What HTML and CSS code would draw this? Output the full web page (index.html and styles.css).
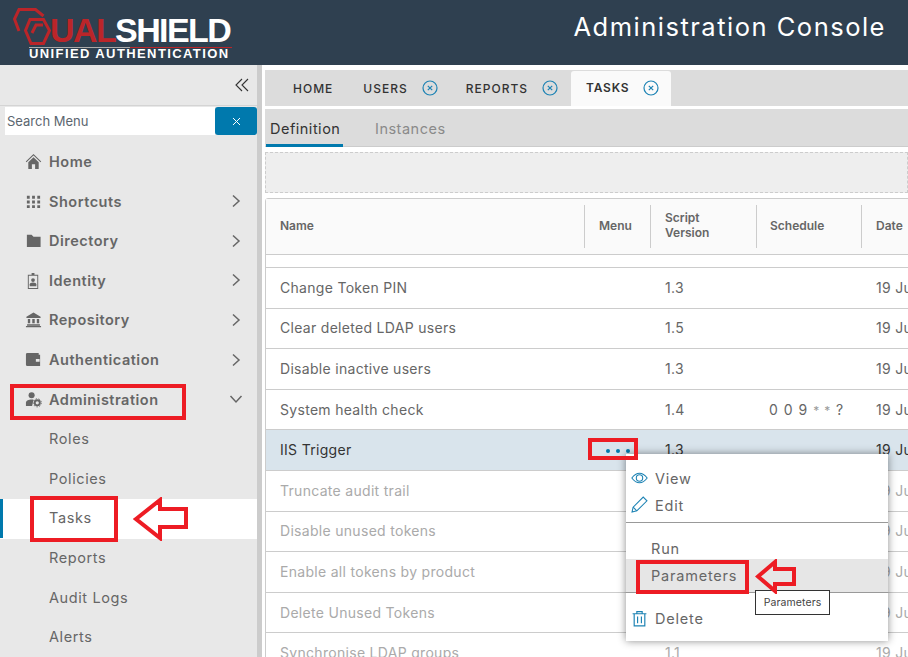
FILE: index.html
```html
<!DOCTYPE html>
<html lang="en">
<head>
    <meta charset="UTF-8">
    <meta name="viewport" content="width=device-width, initial-scale=1.0">
    <title>Administration Console</title>
    <link rel="stylesheet" href="styles.css">
</head>
<body>
    <header class="topbar">
        <div class="logo">
            <svg class="logo-mark" width="46" height="40" viewBox="0 0 46 40" fill="none" stroke="#bb2529" stroke-width="3">
                <path d="M6 23 1.500 11 6 1.500h16.500l8 6.500"/>
                <path d="M17 11.500h13.500l6 11-6 13H18l-5.500-13z"/>
                <path d="M19 25l4-8h7"/>
            </svg>
            <div class="logo-text">
                <div class="logo-name"><span class="logo-red">UAL</span>SHIELD</div>
                <div class="logo-sub">UNIFIED AUTHENTICATION</div>
            </div>
        </div>
        <div class="console-title">Administration Console</div>
    </header>

    <div class="layout">
        <aside class="sidebar">
            <div class="collapse-row">
                <svg width="14" height="14" viewBox="0 0 14 14" fill="none" stroke="#333" stroke-width="1.1"><path d="M7 1 1 7l6 6M13 1 7 7l6 6"/></svg>
            </div>
            <div class="search-row">
                <div class="search-input">Search Menu</div>
                <div class="search-btn">
                    <svg width="9" height="9" viewBox="0 0 9 9" stroke="#fff" stroke-width="1"><path d="M1 1l7 7M8 1 1 8"/></svg>
                </div>
            </div>
            <nav class="menu">
                <a class="menu-item">
                    <svg class="menu-icon" viewBox="0 0 18 18" fill="#666"><path d="M9 1 .8 9l.8.8L9 2.600l7.400 7.200.8-.8z"/><path d="M9 4.400 3.500 9.700V17h3.800v-5h3.400v5h3.800V9.700z"/></svg>
                    Home
                </a>
                <a class="menu-item">
                    <svg class="menu-icon" viewBox="0 0 18 18" fill="#666"><path d="M2 3h3v3H2zM7.500 3h3v3h-3zM13 3h3v3h-3zM2 8h3v3H2zM7.500 8h3v3h-3zM13 8h3v3h-3zM2 13h3v3H2zM7.500 13h3v3h-3zM13 13h3v3h-3z"/></svg>
                    Shortcuts
                    <svg class="chevron" viewBox="0 0 10 14"><path d="M2 1.500 8 7l-6 5.500"/></svg>
                </a>
                <a class="menu-item">
                    <svg class="menu-icon" viewBox="0 0 18 18" fill="#666"><path d="M2 3h5l2 2h7.500v11H2z"/></svg>
                    Directory
                    <svg class="chevron" viewBox="0 0 10 14"><path d="M2 1.500 8 7l-6 5.500"/></svg>
                </a>
                <a class="menu-item">
                    <svg class="menu-icon" viewBox="0 0 18 18" fill="#666"><path d="M3 3h4V1h3v2h4v15H3zm1 1v13h9V4z"/><circle cx="8.500" cy="8.500" r="2"/><path d="M5 15v-2c0-1 1.500-1.800 3.500-1.800S12 12 12 13v2z"/></svg>
                    Identity
                    <svg class="chevron" viewBox="0 0 10 14"><path d="M2 1.500 8 7l-6 5.500"/></svg>
                </a>
                <a class="menu-item">
                    <svg class="menu-icon" viewBox="0 0 18 18" fill="#666"><path d="M9 1.500 1.500 6v1.500h15V6zM3 8.500h2.500V13H3zM7.700 8.500h2.600V13H7.700zM12.500 8.500H15V13h-2.500zM2.200 14h13.600v1.500H2.200zM1 16h16v1.200H1z"/></svg>
                    Repository
                    <svg class="chevron" viewBox="0 0 10 14"><path d="M2 1.500 8 7l-6 5.500"/></svg>
                </a>
                <a class="menu-item">
                    <svg class="menu-icon" viewBox="0 0 18 18" fill="#666"><path d="M2.500 2h12v2h1.500v12H2.500A1.500 1.500 0 0 1 1 14.500v-11A1.500 1.500 0 0 1 2.500 2zm9 6.500v3h4v-3z"/></svg>
                    Authentication
                    <svg class="chevron" viewBox="0 0 10 14"><path d="M2 1.500 8 7l-6 5.500"/></svg>
                </a>
                <a class="menu-item">
                    <svg class="menu-icon" viewBox="0 0 18 18" fill="#666"><circle cx="7" cy="4.500" r="3.200"/><path d="M1 16v-3.500C1 10 4 9 7 9c1 0 1.500.1 2 .3L7.500 16z"/><circle cx="13" cy="12.500" r="2.700" fill="none" stroke="#666" stroke-width="2"/><circle cx="13" cy="12.500" r="4.300" fill="none" stroke="#666" stroke-width="1" stroke-dasharray="1.500 1.500"/></svg>
                    Administration
                    <svg class="chevron chevron-down" viewBox="0 0 14 10"><path d="M1.500 2 7 8l5.500-6"/></svg>
                </a>
                <a class="menu-item sub">Roles</a>
                <a class="menu-item sub">Policies</a>
                <a class="menu-item sub active">Tasks</a>
                <a class="menu-item sub">Reports</a>
                <a class="menu-item sub">Audit Logs</a>
                <a class="menu-item sub">Alerts</a>
            </nav>
        </aside>

        <main class="content">
            <div class="tabs">
                <div class="tab tab-home">HOME</div>
                <div class="tab">USERS <svg class="tab-close" viewBox="0 0 16 16"><circle cx="8" cy="8" r="7"/><path d="M5.800 5.800l4.400 4.400M10.200 5.800l-4.400 4.400"/></svg></div>
                <div class="tab">REPORTS <svg class="tab-close" viewBox="0 0 16 16"><circle cx="8" cy="8" r="7"/><path d="M5.800 5.800l4.400 4.400M10.200 5.800l-4.400 4.400"/></svg></div>
                <div class="tab tab-active">TASKS <svg class="tab-close" viewBox="0 0 16 16"><circle cx="8" cy="8" r="7"/><path d="M5.800 5.800l4.400 4.400M10.200 5.800l-4.400 4.400"/></svg></div>
            </div>
            <div class="subtabs">
                <div class="subtab subtab-active">Definition</div>
                <div class="subtab">Instances</div>
            </div>
            <div class="toolbar"></div>
            <div class="grid">
                <div class="grid-head">
                    <div class="col-head">Name</div>
                    <div class="col-head">Menu</div>
                    <div class="col-head">Script<br>Version</div>
                    <div class="col-head">Schedule</div>
                    <div class="col-head">Date</div>
                </div>
                <div class="grid-spacer"></div>
                <div class="row"><div>Change Token PIN</div><div></div><div>1.3</div><div></div><div>19 Jun 2020</div></div>
                <div class="row"><div>Clear deleted LDAP users</div><div></div><div>1.5</div><div></div><div>19 Jun 2020</div></div>
                <div class="row"><div>Disable inactive users</div><div></div><div>1.3</div><div></div><div>19 Jun 2020</div></div>
                <div class="row"><div>System health check</div><div></div><div>1.4</div><div>0 0 9 <span class="star">* *</span> ?</div><div>19 Jun 2020</div></div>
                <div class="row row-selected"><div>IIS Trigger</div><div class="dots"><i></i><i></i><i></i></div><div>1.3</div><div></div><div>19 Jun 2020</div></div>
                <div class="row row-off"><div>Truncate audit trail</div><div></div><div></div><div></div><div>19 Jun 2020</div></div>
                <div class="row row-off"><div>Disable unused tokens</div><div></div><div></div><div></div><div>19 Jun 2020</div></div>
                <div class="row row-off"><div>Enable all tokens by product</div><div></div><div></div><div></div><div>19 Jun 2020</div></div>
                <div class="row row-off"><div>Delete Unused Tokens</div><div></div><div></div><div></div><div>19 Jun 2020</div></div>
                <div class="row row-off"><div>Synchronise LDAP groups</div><div></div><div>1.1</div><div></div><div>19 Jun 2020</div></div>
            </div>
        </main>
    </div>

    <div class="popup">
        <div class="popup-group">
            <div class="popup-item">
                <svg class="popup-icon" viewBox="0 0 16 16" fill="none" stroke="#1d83b4" stroke-width="1"><path d="M.8 7.500C3 4.500 5.500 3 8 3s5 1.500 7.200 4.500C13 10.500 10.500 12 8 12S3 10.500.8 7.500z"/><circle cx="8" cy="7.500" r="3"/></svg>
                View
            </div>
            <div class="popup-item">
                <svg class="popup-icon popup-icon-edit" viewBox="0 0 16 16" fill="none" stroke="#1d83b4" stroke-width="1"><path d="M1 15l1-4.500L11.500 1l3.500 3.500L5.500 14z"/><path d="M2 10.500 5.500 14"/></svg>
                Edit
            </div>
        </div>
        <div class="popup-group popup-plain">
            <div class="popup-item popup-run">Run</div>
            <div class="popup-item popup-hover">Parameters</div>
        </div>
        <div class="popup-group">
            <div class="popup-item">
                <svg class="popup-icon" viewBox="0 0 16 16" fill="none" stroke="#1d83b4" stroke-width="1.100"><path d="M1.500 3.500h13M5.500 3.500V1.500h5v2M3 3.500V15h10V3.500M6.200 6v6.500M9.800 6v6.500"/></svg>
                Delete
            </div>
        </div>
    </div>
    <div class="tooltip">Parameters</div>

    <div class="mark mark-admin"></div>
    <div class="mark mark-tasks"></div>
    <div class="mark mark-dots"></div>
    <div class="mark mark-params"></div>
    <svg class="arrow arrow-tasks" viewBox="0 0 55 44" fill="#fff" stroke="#ed1c24" stroke-width="4"><path d="M3 22 27 3v9h26v18H27v11z"/></svg>
    <svg class="arrow arrow-params" viewBox="0 0 41 35" fill="#e6e6e6" stroke="#ed1c24" stroke-width="4"><path d="M3 17.500 20 3v7h19v15H20v7z"/></svg>
</body>
</html>
```

FILE: styles.css
```css
* {
    box-sizing: border-box;
}

html, body {
    height: 657px;
    overflow: hidden;
}

body {
    margin: 0;
    font-family: 'Inter', 'Open Sans', sans-serif;
    color: #666;
    background: #fff;
    position: relative;
}

.topbar {
    height: 65px;
    background: #2f4050;
    display: flex;
    justify-content: space-between;
    padding: 8px 22px 0 13px;
}

.logo {
    display: flex;
    align-items: flex-start;
}

.logo-mark {
    margin-right: -10px;
    flex: none;
}

.logo-text {
    display: flex;
    flex-direction: column;
    padding-top: 5px;
    font-family: 'Liberation Sans', sans-serif;
    color: #fff;
}

.logo-name {
    font-size: 34px;
    line-height: 34px;
    font-weight: bold;
    letter-spacing: -1.600px;
    padding-left: 1px;
}

.logo-red {
    color: #bb2529;
}

.logo-sub {
    width: 203px;
    margin-left: -20px;
    font-size: 13px;
    line-height: 11px;
    font-weight: bold;
    letter-spacing: 1.400px;
    white-space: nowrap;
    padding-top: 1px;
    background: linear-gradient(to right, #aaa 50%, #bb2529 50%) top / 100% 1px no-repeat;
}

.console-title {
    color: #fff;
    font-size: 25.500px;
    line-height: 38px;
    letter-spacing: 1.500px;
}

.layout {
    display: flex;
    height: 592px;
}

.sidebar {
    width: 262px;
    flex: none;
    background: #e8e8e8;
    border-right: 5px solid #ccc;
}

.collapse-row {
    height: 41px;
    display: flex;
    align-items: center;
    justify-content: flex-end;
    padding-right: 8px;
    border-bottom: 1px solid #d4d4d4;
}

.search-row {
    display: flex;
    margin: 1px 0 7.200px 5px;
    height: 28px;
}

.search-input {
    flex: 1;
    background: #fff;
    font-size: 13px;
    line-height: 28px;
    padding-left: 2px;
    color: #5c6670;
}

.search-btn {
    width: 42px;
    background: #0079ad;
    border-radius: 3px;
    display: flex;
    align-items: center;
    justify-content: center;
}

.menu-item {
    display: flex;
    align-items: center;
    height: 39.600px;
    padding-left: 25px;
    padding-bottom: 0.900px;
    font-size: 14.500px;
    font-weight: 600;
    letter-spacing: 0.500px;
    color: #666;
}

.menu-icon {
    width: 17px;
    height: 17px;
    margin-right: 7px;
    flex: none;
}

.chevron {
    width: 10px;
    height: 14px;
    margin-left: auto;
    margin-right: 16px;
    fill: none;
    stroke: #666;
    stroke-width: 1.500;
}

.chevron-down {
    width: 14px;
    height: 10px;
    margin-right: 14px;
}

.sub {
    padding-left: 49px;
    font-weight: 400;
    letter-spacing: 0.600px;
}

.active {
    background: #fff;
    box-shadow: 0 1px 0 #fff;
    border-left: 3px solid #0079ad;
    padding-left: 46px;
}

.content {
    flex: 1;
    min-width: 0;
    padding: 5px 0 0 3px;
    overflow: hidden;
}

.tabs {
    height: 36px;
    background: #dcdcdc;
    display: flex;
    padding-left: 14px;
}

.tab {
    display: flex;
    align-items: center;
    gap: 14px;
    padding: 0 14px;
    font-size: 12px;
    font-weight: 500;
    letter-spacing: 1px;
    color: #333;
    white-space: nowrap;
}

.tab-home {
    margin-right: 2px;
}

.tab-active {
    background: #fafafa;
    margin: 1px 0 0 -1px;
    font-weight: 600;
    letter-spacing: 0.800px;
    border-radius: 3px 3px 0 0;
    padding: 0 12px 2px 15px;
}

.tab-close {
    width: 16px;
    height: 16px;
    fill: none;
    stroke: #1d83b4;
    stroke-width: 1.200;
}

.subtabs {
    height: 38px;
    margin-top: 3px;
    background: #dcdcdc;
    border-bottom: 1px solid #ccc;
    display: flex;
    padding-left: 1px;
}

.subtab {
    height: 38px;
    padding: 0 4px;
    margin-right: 28px;
    line-height: 40px;
    font-size: 14.500px;
    letter-spacing: 0.500px;
    color: #8a8a8a;
}

.subtab-active {
    color: #333;
    width: 77px;
    white-space: nowrap;
    border-bottom: 3px solid #0079ad;
}

.toolbar {
    height: 41px;
    margin-top: 5px;
    background: #eee;
    border: 1px dashed #ccc;
}

.grid {
    margin-top: 5px;
    background: #fff;
    border: 1px solid #ccc;
    border-radius: 3px 0 0 0;
    width: 800px;
}

.grid-head,
.row {
    display: grid;
    grid-template-columns: 318px 66px 106px 105px 1fr;
}

.grid-head {
    height: 56px;
    background: #fafafa;
    border-bottom: 1px solid #ccc;
    align-items: center;
}

.col-head {
    height: 43px;
    display: flex;
    align-items: center;
    padding: 0 0 3px 14px;
    font-size: 12px;
    line-height: 15px;
    font-weight: 600;
    border-left: 1px solid #ccc;
}

.col-head:nth-child(4) {
    padding-left: 13px;
}

.col-head:first-child {
    border-left: none;
}

.grid-spacer {
    height: 13px;
    border-bottom: 1px solid #ccc;
}

.row {
    height: 40.600px;
    padding-bottom: 1px;
    border-bottom: 1px solid #ccc;
    align-items: center;
    font-size: 14px;
    letter-spacing: 0.300px;
    color: #666;
    white-space: nowrap;
}

.row > div {
    padding-left: 14px;
}

.row > div:nth-child(3),
.row > div:nth-child(5) {
    padding-left: 15px;
}

.row > div:nth-child(4) {
    padding-left: 13px;
    letter-spacing: 1px;
}

.star {
    color: #999;
    font-size: 12px;
    letter-spacing: 0.800px;
}

.row-selected {
    background: #d9e4ec;
    color: #333;
}

.row-off {
    color: #aaa;
}

.dots {
    display: flex;
    gap: 6px;
}

.dots i {
    width: 4px;
    height: 4px;
    margin-top: 2px;
    border-radius: 50%;
    background: #0079ad;
}

.dots i:first-child {
    margin-left: 8px;
}

.popup {
    position: absolute;
    left: 626px;
    top: 454px;
    width: 262px;
    height: 187px;
    background: #fff;
    box-shadow: 0 0 8px rgba(0, 0, 0, 0.45);
    font-size: 14.500px;
    letter-spacing: 0.800px;
    color: #666;
}

.popup-group {
    padding: 11px 0 3px;
    border-bottom: 1px solid #999;
}

.popup-group:last-child {
    border-bottom: none;
    padding-top: 12px;
}

.popup-plain {
    padding: 0;
}

.popup-item {
    height: 27px;
    display: flex;
    align-items: center;
    padding-left: 5px;
}

.popup-icon {
    width: 17px;
    height: 17px;
    margin-right: 7px;
}

.popup-icon-edit {
    margin-top: -3px;
}

.popup-plain .popup-item {
    height: 33px;
    padding-left: 25px;
}

.popup-plain .popup-run {
    height: 36px;
    padding-top: 14px;
}

.popup-hover {
    background: #e6e6e6;
}

.tooltip {
    position: absolute;
    left: 755px;
    top: 590px;
    width: 75px;
    height: 25px;
    background: #fff;
    border: 1px solid #333;
    font-size: 10.500px;
    letter-spacing: 0.100px;
    line-height: 23px;
    text-align: center;
    color: #444;
}

.mark {
    position: absolute;
    border: 4px solid #ed1c24;
}

.mark-admin {
    left: 10px;
    top: 384px;
    width: 176px;
    height: 36px;
}

.mark-tasks {
    left: 30px;
    top: 496px;
    width: 88px;
    height: 46px;
}

.mark-dots {
    left: 588px;
    top: 438px;
    width: 50px;
    height: 22px;
}

.mark-params {
    left: 636px;
    top: 560px;
    width: 113px;
    height: 34px;
}

.arrow {
    position: absolute;
}

.arrow-tasks {
    left: 133px;
    top: 497px;
    width: 55px;
    height: 44px;
}

.arrow-params {
    left: 755px;
    top: 559px;
    width: 41px;
    height: 35px;
}
```
